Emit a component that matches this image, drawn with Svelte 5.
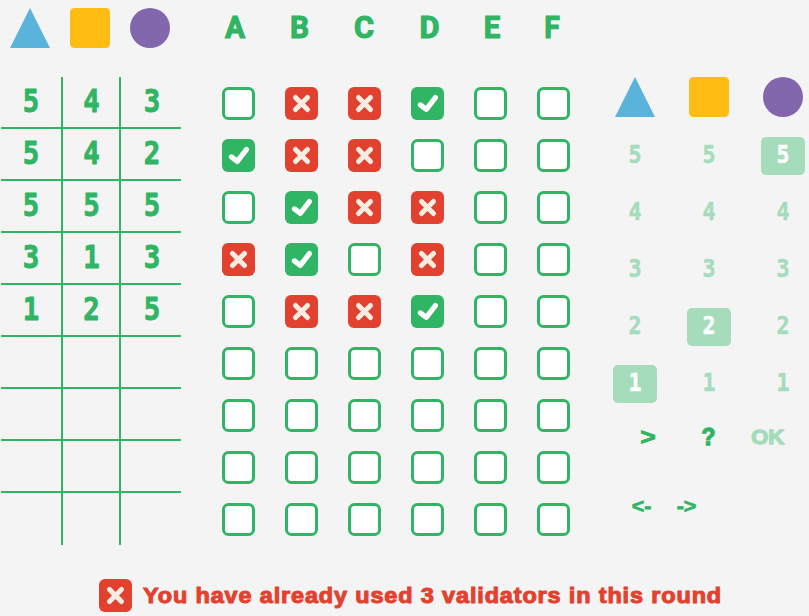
<script>
  const guesses = ['543', '542', '555', '313', '125', '', '', '', ''];
  const letters = [
    ['A', 64, 20], ['B', 65, 19], ['C', 64, 20], ['D', 67, 20], ['E', 58, 16.5], ['F', 62, 15.5]
  ];
  const marks = ['-xxv--', 'vxx---', '-vxx--', 'xv-x--', '-xxv--', '------', '------', '------', '------'];
  const digits = [5, 4, 3, 2, 1];
  const chosen = [1, 2, 5];
</script>

{#snippet shapes()}
  <svg width="40" height="40"><path d="M20 0L40 40H0Z" fill="#59b3da" /></svg>
  <svg width="40" height="40"><rect width="40" height="40" rx="4.5" fill="#ffbc12" /></svg>
  <svg width="40" height="40"><circle cx="20" cy="20" r="20" fill="#8267ac" /></svg>
{/snippet}

{#snippet mark(kind)}
  {#if kind === 'x'}
    <svg class="box" viewBox="0 0 33 33"><rect width="33" height="33" rx="6" fill="#e3412f" /><path d="M10.5 10.5L22.5 22.5M22.5 10.5L10.5 22.5" stroke="#f7ede2" stroke-width="5" stroke-linecap="round" /></svg>
  {:else if kind === 'v'}
    <svg class="box" viewBox="0 0 33 33"><rect width="33" height="33" rx="6" fill="#2fb563" /><path d="M9.4 17.9L15.3 22.4L24.4 10.6" fill="none" stroke="#fff" stroke-width="5.2" stroke-linecap="round" stroke-linejoin="round" /></svg>
  {:else}
    <svg class="box" viewBox="0 0 33 33"><rect x="1.5" y="1.5" width="30" height="30" rx="5" fill="#fff" stroke="#2fb563" stroke-width="3" /></svg>
  {/if}
{/snippet}

<main>
  <div class="board">
    <section class="notes">
      <div class="shapes">{@render shapes()}</div>
      <div class="table">
        {#each guesses as g}
          <div class="row">
            {#each [0, 1, 2] as c}
              <div class="cell"><svg width="30" height="36">
                <text class="digit" x={c === 0 ? 15 : c === 1 ? 15.5 : 16} y="28.2" font-size="31.5" textLength="16.5" lengthAdjust="spacingAndGlyphs" text-anchor="middle">{g[c] ?? ''}</text>
              </svg></div>
            {/each}
          </div>
        {/each}
      </div>
    </section>

    <section class="checks">
      <div class="letters">
        {#each letters as [l, w, len]}
          <svg width={w} height="40"><text class="letter" x={w / 2} y="30" textLength={len} lengthAdjust="spacingAndGlyphs" text-anchor="middle">{l}</text></svg>
        {/each}
      </div>
      <div class="marks">
        {#each marks as line}
          {#each line as k}{@render mark(k)}{/each}
        {/each}
      </div>
    </section>

    <section class="picker">
      <div class="shapes wide">{@render shapes()}</div>
      <div class="pad">
        {#each digits as d}
          {#each chosen as c}
            <div class="tile" class:on={c === d}><svg width="44" height="38">
              <text class="digit" x="22" y="26" font-size="24" textLength="13" lengthAdjust="spacingAndGlyphs" text-anchor="middle">{d}</text>
            </svg></div>
          {/each}
        {/each}
      </div>
      <div class="actions">
        <svg width="60" height="30"><text class="heavy" x="35" y="24" font-size="24" textLength="15.5" lengthAdjust="spacingAndGlyphs" text-anchor="middle">&gt;</text></svg>
        <svg width="60" height="30"><text class="heavy thick" x="35.5" y="24" font-size="23" textLength="14" lengthAdjust="spacingAndGlyphs" text-anchor="middle">?</text></svg>
        <svg width="60" height="30"><text class="heavy thick faded" x="34.7" y="23" font-size="20.5" textLength="33" lengthAdjust="spacingAndGlyphs" text-anchor="middle">OK</text></svg>
      </div>
      <div class="arrows">
        <svg width="45" height="30"><text class="heavy" x="28.5" y="23" font-size="20" textLength="19.5" lengthAdjust="spacingAndGlyphs" text-anchor="middle">&lt;-</text></svg>
        <svg width="45" height="30"><text class="heavy" x="28.5" y="23" font-size="20" textLength="19.5" lengthAdjust="spacingAndGlyphs" text-anchor="middle">-&gt;</text></svg>
      </div>
    </section>
  </div>

  <div class="message">
    {@render mark('x')}
    <svg width="590" height="33"><text class="warning" x="1" y="24" textLength="579" lengthAdjust="spacingAndGlyphs">You have already used 3 validators in this round</text></svg>
  </div>
</main>

<style>
  :global(body) { background: #f4f4f4; overflow: hidden; }
  main { width: 809px; height: 616px; background: #f4f4f4; overflow: hidden; }
  svg { display: block; flex: none; }
  .board { display: flex; height: 579px; }
  .notes { width: 203px; flex: none; }
  .shapes { display: flex; gap: 20px; padding: 8px 0 0 10px; }
  .shapes.wide { gap: 34px; padding: 77px 0 0 7px; }
  .table { width: 180px; margin: 29px 0 0 1px; }
  .row { display: grid; grid-template-columns: 62px 58px 60px; height: 52px; box-sizing: border-box; border-bottom: 2px solid #2fb563; }
  .row:last-child { border-bottom: 0; }
  .cell { display: flex; align-items: center; justify-content: center; border-right: 2px solid #2fb563; margin-bottom: -2px; padding-bottom: 2px; box-sizing: border-box; }
  .row:last-child .cell { margin-bottom: 0; }
  .cell:last-child { border-right: 0; }
  .digit { font-family: "DejaVu Sans Mono", monospace; font-weight: 700; fill: #2fb563; stroke: #2fb563; stroke-width: .9; stroke-linejoin: round; }
  .checks { width: 405px; flex: none; }
  .letters { display: flex; padding-top: 8px; }
  .letter { font: 700 30.5px Roboto, sans-serif; fill: #2fb563; stroke: #2fb563; stroke-width: 1.1; }
  .marks { display: grid; grid-template-columns: repeat(6, 33px); gap: 19px 30px; padding: 39px 0 0 19px; }
  .box { width: 33px; height: 33px; }
  .picker { flex: none; }
  .pad { display: grid; grid-template-columns: repeat(3, 44px); gap: 19px 30px; padding: 20px 0 0 5px; }
  .tile { height: 38px; border-radius: 5px; }
  .tile .digit { fill: #a5dcbb; stroke: #a5dcbb; stroke-width: .5; }
  .tile.on { background: #a5dcbb; }
  .tile.on .digit { fill: #fff; stroke: #fff; }
  .actions { display: flex; padding: 18px 0 0 5px; }
  .arrows { display: flex; padding: 39px 0 0 5px; }
  .heavy { font-family: "Liberation Sans", Arial, sans-serif; font-weight: 700; fill: #2fb563; stroke: #2fb563; stroke-width: .8; }
  .heavy.thick { stroke-width: 1.3; }
  .heavy.faded { fill: #a5dcbb; stroke: #a5dcbb; }
  .message { display: flex; gap: 10px; padding-left: 99px; }
  .warning { font: 700 21.5px "Liberation Sans", Arial, sans-serif; letter-spacing: .8px; fill: #e3412f; stroke: #e3412f; stroke-width: 1; }
</style>
